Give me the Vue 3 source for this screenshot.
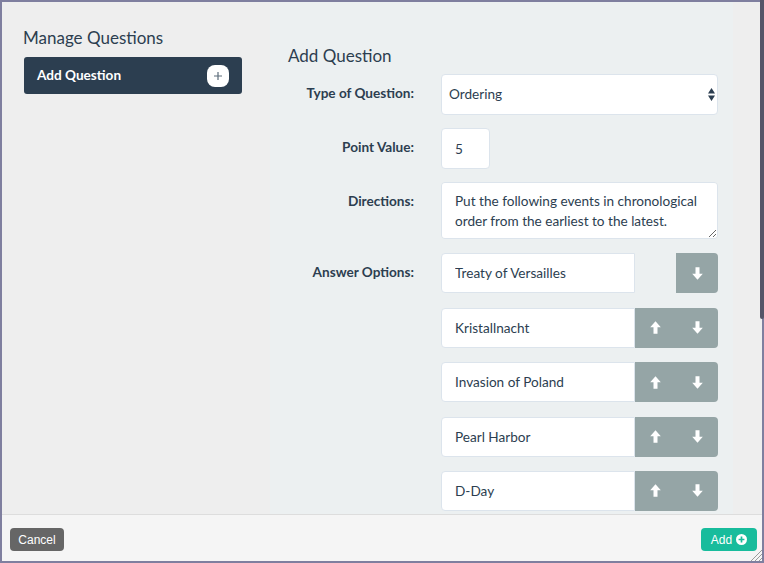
<script setup>
const answers = [
  { id: 1, text: "Treaty of Versailles", up: false },
  { id: 2, text: "Kristallnacht", up: true },
  { id: 3, text: "Invasion of Poland", up: true },
  { id: 4, text: "Pearl Harbor", up: true },
  { id: 5, text: "D-Day", up: true },
];
const directions =
  "Put the following events in chronological order from the earliest to the latest.";
</script>

<template>
  <div class="modal">
    <div class="body">
      <aside class="sidebar">
        <h2 class="side-title">Manage Questions</h2>
        <div class="side-item">
          <span class="side-label">Add Question</span>
          <span class="plus-badge">
            <svg width="10" height="10" viewBox="0 0 10 10">
              <path d="M5 1v8M1 5h8" stroke="#5d6d7b" stroke-width="1.2" fill="none" />
            </svg>
          </span>
        </div>
      </aside>

      <main class="panel">
        <h2 class="panel-title">Add Question</h2>

        <div class="row">
          <label class="label">Type of Question:</label>
          <div class="select-wrap">
            <select class="control select">
              <option>Ordering</option>
            </select>
            <svg class="select-arrows" width="7" height="13" viewBox="0 0 7 13">
              <path d="M3.5 0 7 5.6H0zM3.5 13 0 7.4h7z" fill="#2c3e50" />
            </svg>
          </div>
        </div>

        <div class="row">
          <label class="label">Point Value:</label>
          <input class="control points" value="5" />
        </div>

        <div class="row">
          <label class="label">Directions:</label>
          <textarea class="control directions" :value="directions"></textarea>
        </div>

        <div class="row answers-row">
          <label class="label">Answer Options:</label>
          <div class="answers">
            <div v-for="a in answers" :key="a.id" class="answer">
              <input class="control answer-input" :value="a.text" />
              <div class="arrows" :class="{ single: !a.up }">
                <button v-if="a.up" class="arrow-btn">
                  <svg width="11" height="13" viewBox="0 0 11 13">
                    <path d="M5.5 0.3 10.8 6.2H7.5V12.7H3.5V6.2H0.2z" fill="#fff" />
                  </svg>
                </button>
                <button class="arrow-btn">
                  <svg width="11" height="13" viewBox="0 0 11 13">
                    <path d="M5.5 12.7 0.2 6.8H3.5V0.3H7.5V6.8H10.8z" fill="#fff" />
                  </svg>
                </button>
              </div>
            </div>
          </div>
        </div>
      </main>
    </div>

    <footer class="footer">
      <button class="btn cancel">Cancel</button>
      <button class="btn add">
        Add
        <svg width="11" height="11" viewBox="0 0 11 11">
          <circle cx="5.5" cy="5.5" r="5.5" fill="#fff" />
          <path d="M5.5 2.6v5.8M2.6 5.5h5.8" stroke="#18bc9c" stroke-width="1.7" />
        </svg>
      </button>
      <svg class="grip" width="12" height="12" viewBox="0 0 12 12">
        <path d="M12 1 1 12M12 5 5 12M12 9 9 12" stroke="#9a9a9a" stroke-width="1" fill="none" />
      </svg>
    </footer>

    <div class="scrollbar"></div>
  </div>
</template>

<style scoped>
.modal {
  position: relative;
  width: 764px;
  height: 563px;
  box-sizing: border-box;
  border: 2px solid #7f7f9f;
  background: #eeeeee;
  display: flex;
  flex-direction: column;
  font-family: Lato, "Liberation Sans", sans-serif;
  color: #2c3e50;
}

.body {
  flex: 1;
  min-height: 0;
  display: flex;
  overflow: hidden;
}

.sidebar {
  width: 218px;
  margin: 0 28px 0 22px;
  flex-shrink: 0;
}

.side-title {
  margin: 25px 0 8px -1px;
  font-size: 17px;
  line-height: 22px;
  font-weight: 400;
}

.side-item {
  height: 37px;
  box-sizing: border-box;
  padding: 0 13px;
  background: #2c3e50;
  border-radius: 3px;
  color: #fff;
  font-size: 13.6px;
  font-weight: 700;
  display: flex;
  align-items: center;
  justify-content: space-between;
}

.side-label {
  margin-top: -2px;
}

.plus-badge {
  width: 22px;
  height: 22px;
  border-radius: 8px;
  background: #fff;
  display: flex;
  align-items: center;
  justify-content: center;
}

.panel {
  width: 463px;
  flex-shrink: 0;
  background: #ecf0f1;
  padding: 43px 15px 0 18px;
  box-sizing: border-box;
  overflow: hidden;
}

.panel-title {
  margin: 0 0 7px;
  font-size: 17px;
  line-height: 22px;
  font-weight: 400;
}

.row {
  display: flex;
  margin-bottom: 13px;
}

.row:nth-of-type(3) {
  margin-bottom: 14.4px;
}

.label {
  width: 126px;
  flex-shrink: 0;
  margin-right: 27px;
  text-align: right;
  font-size: 13.6px;
  font-weight: 700;
  line-height: 20px;
  padding-top: 9px;
}

.control {
  box-sizing: border-box;
  background: #fff;
  border: 1px solid #dce4ec;
  border-radius: 4px;
  color: #2c3e50;
  font-family: inherit;
  font-size: 13.6px;
  outline: none;
}

.select-wrap {
  position: relative;
  width: 277px;
}

.select {
  width: 100%;
  height: 41px;
  padding: 0 7px 2px;
  appearance: none;
  -webkit-appearance: none;
}

.select-arrows {
  position: absolute;
  right: 3.5px;
  top: 14px;
}

.points {
  width: 49px;
  height: 41px;
  padding: 0 13px;
}

.directions {
  display: block;
  width: 277px;
  height: 57px;
  padding: 9px 13px;
  line-height: 19.5px;
}

.answers-row {
  margin-bottom: 0;
}

.answers {
  width: 277px;
  display: flex;
  flex-direction: column;
  gap: 14.4px;
}

.answer {
  display: flex;
  flex-shrink: 0;
  height: 40px;
}

.answer-input {
  width: 194px;
  height: 40px;
  padding: 0 13px;
  border-radius: 4px 0 0 4px;
}

.arrows {
  width: 83px;
  display: flex;
  justify-content: flex-end;
  background: #95a5a6;
  border-radius: 0 4px 4px 0;
}

.arrows.single {
  width: 42px;
  margin-left: 41px;
}

.arrow-btn {
  width: 41.5px;
  border: 0;
  padding: 0;
  background: transparent;
  display: flex;
  align-items: center;
  justify-content: center;
}

.footer {
  position: relative;
  height: 47px;
  flex-shrink: 0;
  box-sizing: border-box;
  background: #f5f5f5;
  border-top: 1px solid #dddddd;
  padding: 3px 5px 0 8px;
  display: flex;
  align-items: center;
  justify-content: space-between;
}

.btn {
  height: 23px;
  border: 0;
  border-radius: 4px;
  color: #fff;
  font-family: "Liberation Sans", Arial, sans-serif;
  font-size: 12px;
  padding: 0;
  display: flex;
  align-items: center;
  justify-content: center;
  gap: 4px;
}

.cancel {
  width: 54px;
  background: #666666;
}

.add {
  width: 56px;
  background: #18bc9c;
}

.grip {
  position: absolute;
  right: 0;
  bottom: 0;
}

.scrollbar {
  position: absolute;
  top: -2px;
  right: -2px;
  width: 4px;
  height: 319px;
  background: #555568;
  border-radius: 0 0 2px 2px;
}
</style>
